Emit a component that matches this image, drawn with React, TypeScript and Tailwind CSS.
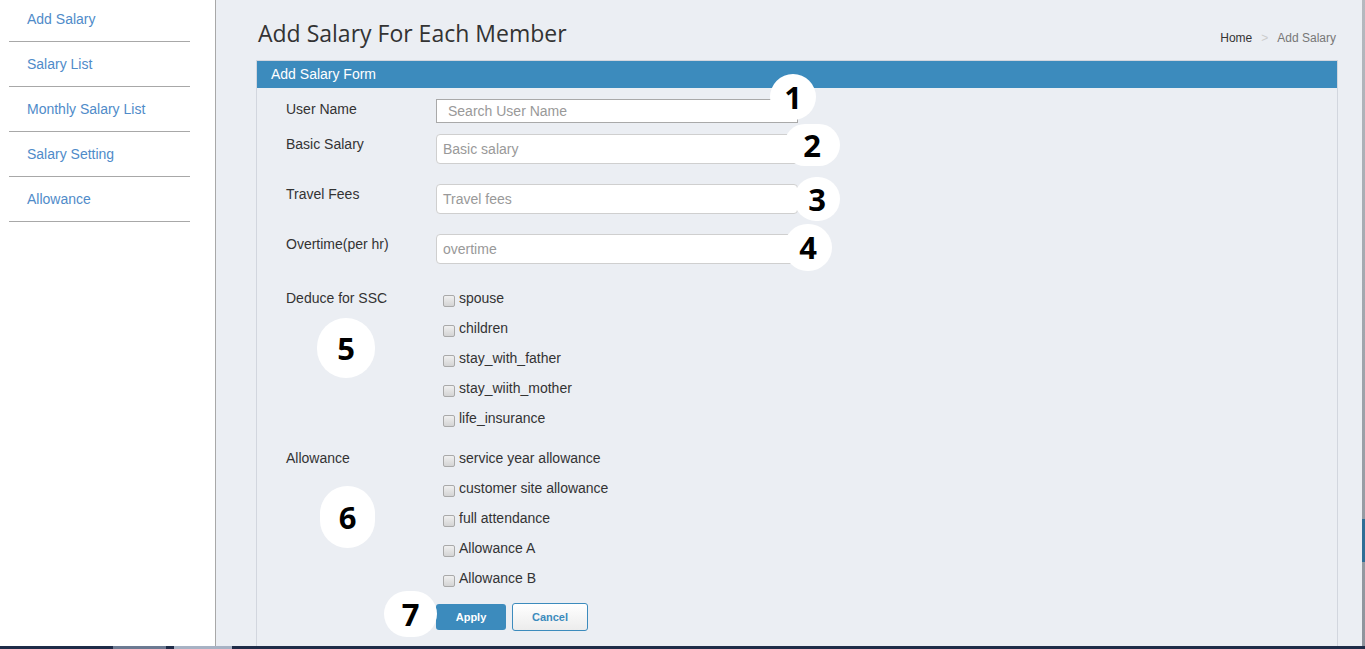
import React from 'react';

const menu = ['Add Salary', 'Salary List', 'Monthly Salary List', 'Salary Setting', 'Allowance'];
const ssc = ['spouse', 'children', 'stay_with_father', 'stay_wiith_mother', 'life_insurance'];
const allowances = ['service year allowance', 'customer site allowance', 'full attendance', 'Allowance A', 'Allowance B'];

function Box() {
    return (
        <span className="mt-[5px] mr-[4px] inline-block h-[12px] w-[12px] shrink-0 rounded-[2px] border border-[#a9a9a9] bg-gradient-to-b from-[#f0f0f0] to-[#d4d4d4]" />
    );
}

function Marker({ n, className }: { n: number; className: string }) {
    // annotation bubbles laid over the form
    return (
        <div
            className={
                'absolute flex items-center justify-center rounded-full bg-white text-[31px] font-bold text-black ' +
                className
            }
            style={{ fontFamily: '"Open Sans", sans-serif' }}
        >
            {n}
        </div>
    );
}

function CheckGroup({ label, items }: { label: string; items: string[] }) {
    return (
        <div className="flex">
            <div className="-mt-[2px] w-[150px]">{label}</div>
            <div className="flex flex-col gap-[13px] pl-[7px]">
                {items.map((it) => (
                    <label key={it} className="flex h-[17px] items-start text-[#333] text-[14px] leading-[17px]">
                        <Box />
                        {it}
                    </label>
                ))}
            </div>
        </div>
    );
}

function InputRow({ label, placeholder }: { label: string; placeholder: string }) {
    return (
        <div className="flex">
            <div className="w-[150px]">{label}</div>
            <div className="flex h-[30px] w-[362px] items-center rounded-[4px] border border-[#cfcfcf] bg-white pl-[6px] text-[14px] text-[#999]">
                {placeholder}
            </div>
        </div>
    );
}

export default function App() {
    return (
        <div
            className="flex h-[649px] w-[1365px] flex-col overflow-hidden text-[14px] text-[#333]"
            style={{ fontFamily: '"Liberation Sans", Arial, sans-serif' }}
        >
            <div className="flex min-h-0 flex-1">
                {/* sidebar */}
                <aside className="w-[216px] shrink-0 border-r border-[#a8a8a8] bg-white pl-[9px] pr-[25px]">
                    {menu.map((m) => (
                        <div
                            key={m}
                            className="flex h-[45px] items-center border-b border-[#a8a8a8] pl-[18px] text-[14px] text-[#4f8bc9] first:h-[42px] first:pb-[3px]"
                        >
                            {m}
                        </div>
                    ))}
                </aside>

                {/* main */}
                <main className="relative flex min-w-0 flex-1 flex-col bg-[#ebeef3] pl-[40px] pr-[24px]">
                    <div className="flex h-[60px] items-end justify-between pb-[10px]">
                        <h1
                            className="pl-[2px] pb-[2px] text-[23px] leading-[30px] text-[#333]"
                            style={{ fontFamily: '"Open Sans", sans-serif' }}
                        >
                            Add Salary For Each Member
                        </h1>
                        <div className="flex gap-[9px] pb-[3px] pr-[2px] text-[12px]">
                            <span className="text-[#333]">Home</span>
                            <span className="text-[#ccc]">&gt;</span>
                            <span className="text-[#777]">Add Salary</span>
                        </div>
                    </div>

                    <section className="flex flex-1 flex-col border-x border-t border-[#d2d6de]">
                        <div className="flex h-[27px] items-center bg-[#3c8bbd] pl-[14px] text-[14px] text-white">
                            Add Salary Form
                        </div>
                        <div className="flex flex-col pl-[29px] pt-[11px]">
                            <div className="flex">
                                <div className="w-[150px]">User Name</div>
                                <div className="flex h-[24px] w-[362px] items-center border border-[#a9a9a9] bg-white pl-[11px] text-[14px] text-[#999]">
                                    Search User Name
                                </div>
                            </div>
                            <div className="mt-[11px] flex flex-col gap-[20px]">
                                <InputRow label="Basic Salary" placeholder="Basic salary" />
                                <InputRow label="Travel Fees" placeholder="Travel fees" />
                                <InputRow label="Overtime(per hr)" placeholder="overtime" />
                            </div>
                            <div className="mt-[26px]">
                                <CheckGroup label="Deduce for SSC" items={ssc} />
                            </div>
                            <div className="mt-[23px]">
                                <CheckGroup label="Allowance" items={allowances} />
                            </div>
                            <div className="mt-[17px] flex gap-[6px] pl-[150px]">
                                <button className="h-[26px] w-[70px] rounded-[3px] bg-[#3c8bbd] text-[11px] font-bold text-white">
                                    Apply
                                </button>
                                <button className="-mt-[1px] h-[28px] w-[76px] rounded-[3px] border border-[#3c8bbd] bg-gradient-to-b from-white to-[#ececec] text-[11px] font-bold text-[#3c8bbd]">
                                    Cancel
                                </button>
                            </div>
                        </div>
                    </section>

                    <Marker n={1} className="left-[554px] top-[74px] h-[46px] w-[46px]" />
                    <Marker n={2} className="left-[568px] top-[124px] h-[42px] w-[56px]" />
                    <Marker n={3} className="left-[578px] top-[177px] h-[44px] w-[46px]" />
                    <Marker n={4} className="left-[568px] top-[224px] h-[47px] w-[48px]" />
                    <Marker n={5} className="left-[101px] top-[318px] h-[60px] w-[58px]" />
                    <Marker n={6} className="left-[104px] top-[486px] h-[62px] w-[55px]" />
                    <Marker n={7} className="left-[168px] top-[591px] h-[46px] w-[53px]" />
                </main>

                {/* window edge */}
                <div className="flex w-[3px] shrink-0 flex-col bg-gradient-to-b from-[#b5b9bf] to-[#8e949c]">
                    <div className="flex-1" />
                    <div className="mb-[84px] h-[43px] bg-[#2e6e96]" />
                </div>
            </div>
            <div className="flex h-[3px] shrink-0 bg-[#1f2c48]">
                <div className="ml-[113px] w-[53px] bg-[#6c7a92]" />
                <div className="ml-[8px] w-[58px] bg-[#a7b2c4]" />
            </div>
        </div>
    );
}
